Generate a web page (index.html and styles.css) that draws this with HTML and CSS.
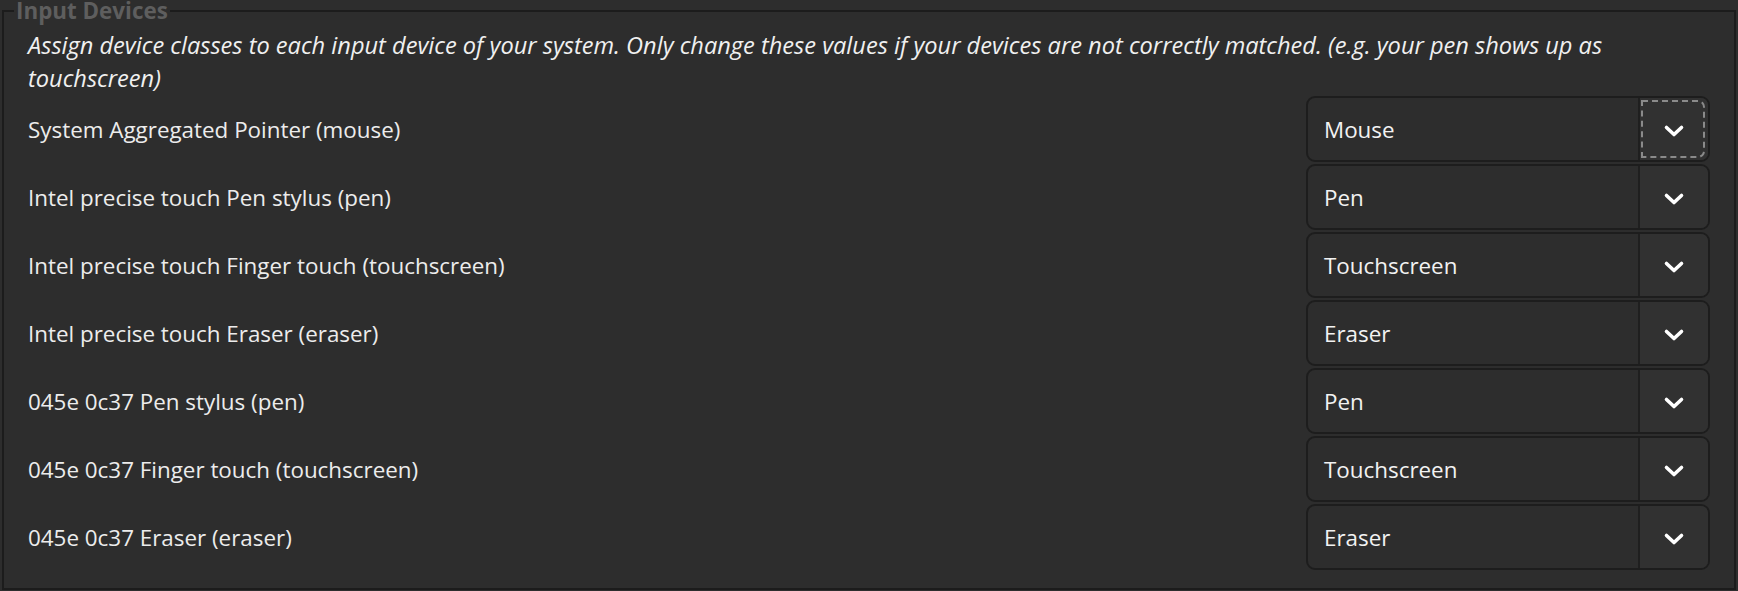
FILE: index.html
```html
<!DOCTYPE html>
<html lang="en">
<head>
<meta charset="utf-8">
<title>Input Devices</title>
<link rel="stylesheet" href="styles.css">
</head>
<body>
<fieldset class="group">
  <legend class="group-title">Input Devices</legend>
  <p class="desc">Assign device classes to each input device of your system. Only change these values if your devices are not correctly matched. (e.g. your pen shows up as touchscreen)</p>
  <div class="rows">
    <div class="row">
      <span class="label">System Aggregated Pointer (mouse)</span>
      <div class="combo"><span class="value">Mouse</span><span class="btn focus"><svg class="chev" viewBox="0 0 22 14" width="22" height="14"><polyline points="3.5,3.5 11,10.5 18.5,3.5"/></svg></span></div>
    </div>
    <div class="row">
      <span class="label">Intel precise touch Pen stylus (pen)</span>
      <div class="combo"><span class="value">Pen</span><span class="btn"><svg class="chev" viewBox="0 0 22 14" width="22" height="14"><polyline points="3.5,3.5 11,10.5 18.5,3.5"/></svg></span></div>
    </div>
    <div class="row">
      <span class="label">Intel precise touch Finger touch (touchscreen)</span>
      <div class="combo"><span class="value">Touchscreen</span><span class="btn"><svg class="chev" viewBox="0 0 22 14" width="22" height="14"><polyline points="3.5,3.5 11,10.5 18.5,3.5"/></svg></span></div>
    </div>
    <div class="row">
      <span class="label">Intel precise touch Eraser (eraser)</span>
      <div class="combo"><span class="value">Eraser</span><span class="btn"><svg class="chev" viewBox="0 0 22 14" width="22" height="14"><polyline points="3.5,3.5 11,10.5 18.5,3.5"/></svg></span></div>
    </div>
    <div class="row">
      <span class="label">045e 0c37 Pen stylus (pen)</span>
      <div class="combo"><span class="value">Pen</span><span class="btn"><svg class="chev" viewBox="0 0 22 14" width="22" height="14"><polyline points="3.5,3.5 11,10.5 18.5,3.5"/></svg></span></div>
    </div>
    <div class="row">
      <span class="label">045e 0c37 Finger touch (touchscreen)</span>
      <div class="combo"><span class="value">Touchscreen</span><span class="btn"><svg class="chev" viewBox="0 0 22 14" width="22" height="14"><polyline points="3.5,3.5 11,10.5 18.5,3.5"/></svg></span></div>
    </div>
    <div class="row">
      <span class="label">045e 0c37 Eraser (eraser)</span>
      <div class="combo"><span class="value">Eraser</span><span class="btn"><svg class="chev" viewBox="0 0 22 14" width="22" height="14"><polyline points="3.5,3.5 11,10.5 18.5,3.5"/></svg></span></div>
    </div>
  </div>
</fieldset>
</body>
</html>
```

FILE: styles.css
```css
html, body {
  margin: 0;
  padding: 0;
  background: #2d2d2d;
  width: 1738px;
  height: 591px;
  overflow: hidden;
}
body {
  font-family: "Open Sans", "Noto Sans", sans-serif;
  color: #ececec;
}
.group {
  margin: 0 2px 1px 2px;
  padding: 0 24px 17px 24px;
  border: 2px solid #1c1c1c;
  min-width: 0;
}
.group-title {
  margin-left: -14px;
  padding: 0 2px;
  font-weight: 700;
  font-size: 22.4px;
  line-height: 22px;
  color: #5e5e5e;
}
.desc {
  margin: 7px 0 0 0;
  max-width: 1640px;
  font-style: italic;
  font-size: 23.6px;
  line-height: 33px;
  color: #f0f0f0;
}
.rows {
  display: flex;
  flex-direction: column;
}
.row {
  height: 68px;
  display: flex;
  align-items: center;
  justify-content: space-between;
}
.label {
  font-size: 22.4px;
  color: #ececec;
}
.combo {
  width: 404px;
  height: 66px;
  box-sizing: border-box;
  border: 2px solid #1d1d1d;
  border-radius: 9px;
  background: #2d2d2d;
  display: flex;
  overflow: hidden;
}
.value {
  flex: 1;
  display: flex;
  align-items: center;
  padding-left: 16px;
  font-size: 22.4px;
  color: #f2f2f2;
  border-right: 2px solid #1f1f1f;
}
.btn {
  width: 68px;
  display: flex;
  align-items: center;
  justify-content: center;
  padding-top: 3px;
  box-sizing: border-box;
  background: #313131;
  position: relative;
}
.btn.focus::after {
  content: "";
  position: absolute;
  inset: 2px 3px 2px 1px;
  border: 2px dashed #8a8a8a;
  border-radius: 0 7px 7px 0;
}
.chev polyline {
  fill: none;
  stroke: #ffffff;
  stroke-width: 3.6;
  stroke-linecap: round;
  stroke-linejoin: round;
}
```
